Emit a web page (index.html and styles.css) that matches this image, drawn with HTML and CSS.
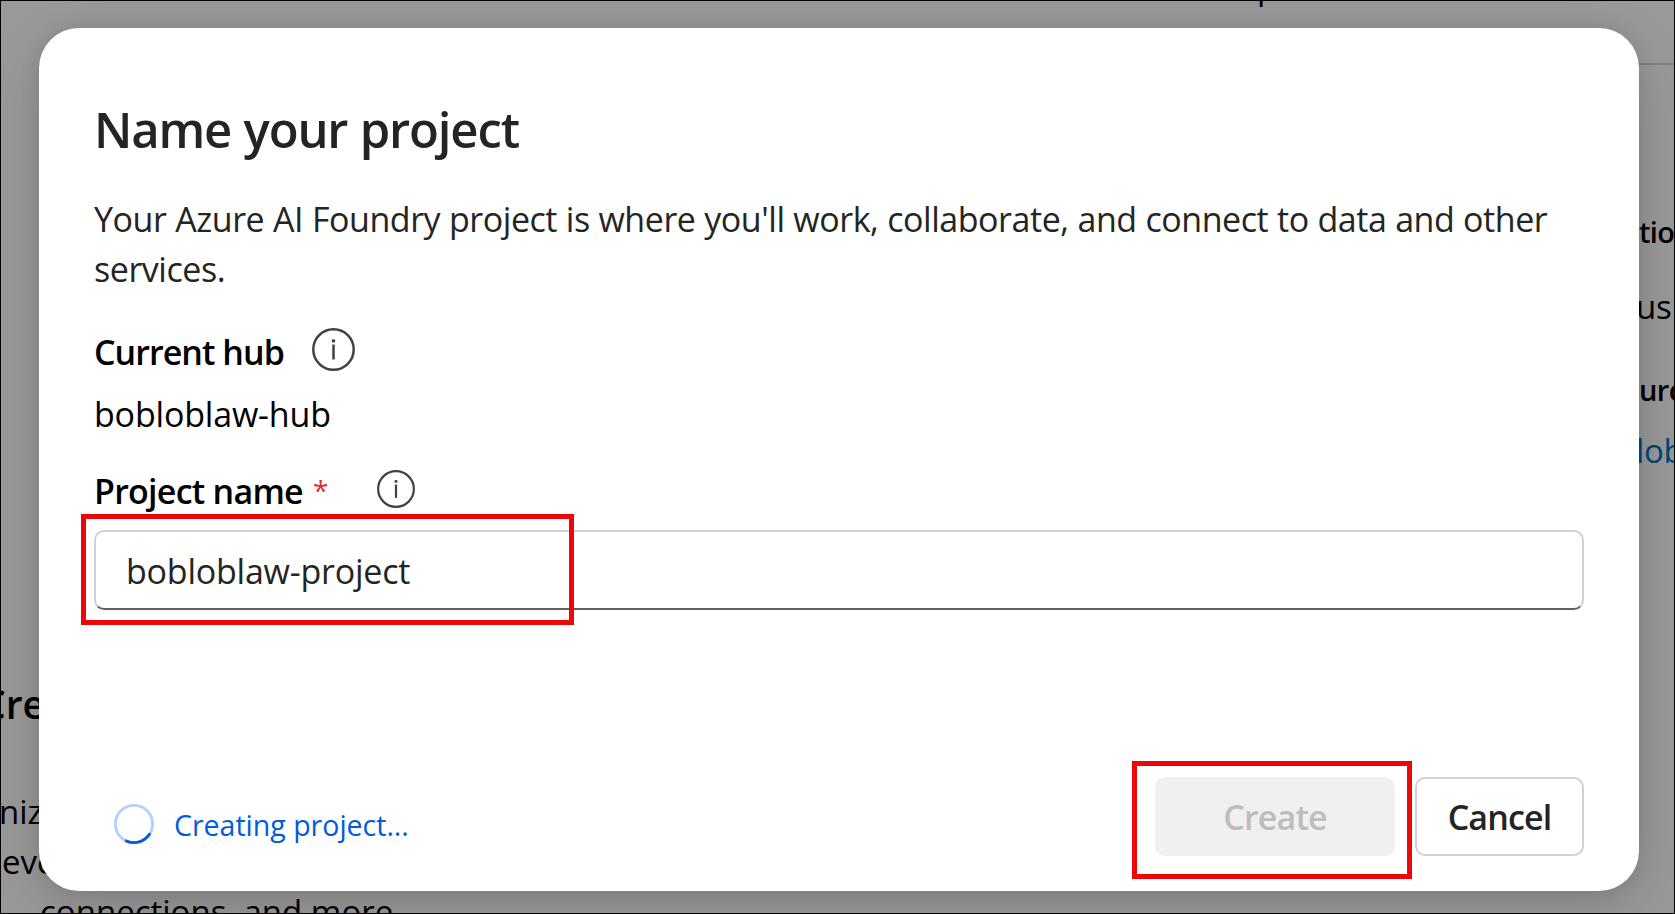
FILE: index.html
```
<!DOCTYPE html>
<html lang="en">
<head>
<meta charset="utf-8">
<title>Name your project</title>
<link rel="stylesheet" href="styles.css">
</head>
<body>
<div class="app">
  <div class="page">
    <div class="page-left">
      <div class="page-title">Cre</div>
      <div class="page-line line-one">niz</div>
      <div class="page-line line-two">eve</div>
      <div class="page-line line-three">connections, and more</div>
    </div>
    <div class="page-tab">p</div>
    <div class="page-right">
      <div class="page-label label-location">tio</div>
      <div class="page-value value-location">us</div>
      <div class="page-label label-resource">urc</div>
      <div class="page-value page-link">lob</div>
    </div>
  </div>
  <main class="dialog">
    <h1 class="title">Name your project</h1>
    <p class="description">Your Azure AI Foundry project is where you'll work, collaborate, and connect to data and other<br>services.</p>
    <div class="label-row hub-row">
      <span class="label hub-label">Current hub</span>
      <svg class="info info-large" viewBox="0 0 43 43"><circle cx="21.5" cy="21.5" r="20.2"/><path d="M21.5 16.5V31.5"/><rect x="19.9" y="11.2" width="3.2" height="3.2" rx="1"/></svg>
    </div>
    <div class="hub-name">bobloblaw-hub</div>
    <div class="label-row name-row">
      <span class="label name-label">Project name</span>
      <span class="required">*</span>
      <svg class="info info-small" viewBox="0 0 43 43"><circle cx="21.5" cy="21.5" r="20.2"/><path d="M21.5 16.5V31.5"/><rect x="19.9" y="11.2" width="3.2" height="3.2" rx="1"/></svg>
    </div>
    <div class="field">bobloblaw-project</div>
    <div class="footer">
      <svg class="spinner" viewBox="0 0 40 40"><circle class="track" cx="20" cy="20" r="18.6"/><path class="arc" d="M36.1 29.3A18.6 18.6 0 0 1 11.3 36.4"/></svg>
      <span class="status">Creating project...</span>
      <button class="button create" disabled>Create</button>
      <button class="button cancel">Cancel</button>
    </div>
  </main>
  <div class="highlight highlight-name"></div>
  <div class="highlight highlight-create"></div>
  <div class="frame"></div>
</div>
</body>
</html>
```
FILE: styles.css
```
* { box-sizing: border-box; }
body { margin: 0; font-family: "Open Sans", "Noto Sans", sans-serif; }
.app { position: relative; width: 1675px; height: 914px; overflow: hidden; background: #999; }
.frame { position: absolute; inset: 0; border: 1px solid #000; pointer-events: none; }

/* Page behind the dialog */
.page { display: flex; height: 914px; color: #000; white-space: nowrap; }
.page-left { flex: none; width: 1257px; padding-top: 676px; }
.page-title { margin-left: -19px; font-size: 39px; line-height: 56px; font-weight: 600; }
.page-line { font-size: 33px; line-height: 50px; }
.line-one { margin: 55px 0 0 -1px; }
.line-two { margin-left: 2px; }
.line-three { margin-left: 40px; }
.page-tab { flex: none; width: 382px; margin-top: -38px; font-size: 33px; line-height: 50px; }
.page-right { flex: none; width: 36px; height: 914px; padding-top: 63px; background: linear-gradient(#808080, #808080) 0 63px / 100% 2px no-repeat; }
.page-label { font-size: 29px; line-height: 50px; font-weight: 600; letter-spacing: -.6px; }
.page-value { font-size: 33px; line-height: 50px; letter-spacing: -.3px; }
.label-location { margin-top: 144px; }
.value-location { margin-top: 25px; margin-left: -3px; }
.label-resource { margin-top: 33px; }
.page-link { margin-top: 11px; margin-left: -3px; color: #004578; }

/* Dialog */
.dialog {
  position: absolute; left: 39px; top: 28px; width: 1600px; height: 863px;
  padding: 66px 55px 35px; border-radius: 40px; background: #fff;
  display: flex; flex-direction: column;
  box-shadow: 0 0 20px rgba(0, 0, 0, .1), 0 20px 60px rgba(0, 0, 0, .14);
}
.title { margin: 0; font-size: 49px; line-height: 70px; font-weight: 600; letter-spacing: -1.15px; word-spacing: .8px; color: #242424; }
.description { margin: 30px 0 0; font-size: 34px; line-height: 50px; letter-spacing: -.45px; word-spacing: .4px; color: #242424; white-space: nowrap; }
.label-row { display: flex; height: 50px; }
.hub-row { margin-top: 32px; }
.name-row { margin-top: 26px; }
.label { font-size: 34px; line-height: 52px; font-weight: 600; color: #000; white-space: nowrap; }
.hub-label { width: 218px; letter-spacing: -.95px; }
.name-label { width: 219px; letter-spacing: -.75px; }
.info { fill: none; stroke: #424242; stroke-width: 2.5; }
.info rect { fill: #424242; stroke: none; }
.info-large { width: 43px; height: 43px; margin-top: 2px; }
.info-small { width: 38px; height: 38px; margin: 5px 0 0 50px; }
.required { width: 14px; font-size: 28px; line-height: 50px; color: #d13438; }
.hub-name { margin-top: 13px; font-size: 34px; line-height: 50px; letter-spacing: -.18px; color: #000; }
.field {
  height: 80px; margin-top: 15px; padding: 0 30px; font-size: 34px; line-height: 78px; letter-spacing: -.22px; color: #242424;
  border: 2px solid #d1d1d1; border-bottom-color: #616161; border-radius: 10px;
}
.footer { display: flex; align-items: center; height: 79px; margin-top: auto; }
.spinner { width: 40px; height: 40px; margin: 15px 0 0 20px; fill: none; stroke-width: 2.8; }
.track { stroke: #b4d0f6; }
.arc { stroke: #015cda; }
.status { margin: 16px auto 0 20px; font-size: 28.5px; line-height: 40px; color: #015cda; }
.button { height: 79px; padding: 2px 0 0; border-radius: 10px; font: 600 34px/73px "Open Sans", "Noto Sans", sans-serif; letter-spacing: -.85px; }
.create { width: 240px; border: 0; background: #f0f0f0; color: #bdbdbd; }
.cancel { width: 169px; margin-left: 20px; border: 2px solid #d1d1d1; background: #fff; color: #242424; }

/* Callout boxes */
.highlight { position: absolute; border: 5px solid #ec0808; }
.highlight-name { left: 81px; top: 514px; width: 493px; height: 111px; }
.highlight-create { left: 1132px; top: 761px; width: 280px; height: 118px; }
```
